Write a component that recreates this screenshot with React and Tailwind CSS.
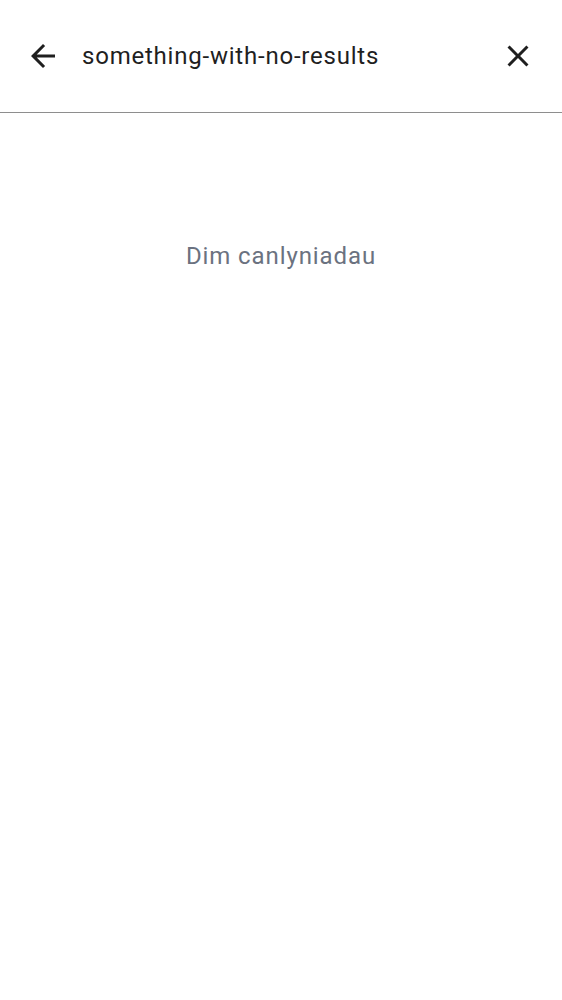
import React from 'react';

const App = () => {
  return (
    <div className="min-h-screen bg-white" style={{ fontFamily: 'Roboto, "Noto Sans", sans-serif' }}>
      {/* Search header */}
      <div className="flex items-center h-[113px] border-b border-[#8e8e8e] pl-[25px] pr-[26px]">
        <button className="w-9 h-9 text-[#1f1f1f] shrink-0">
          <svg viewBox="0 0 24 24" className="w-9 h-9" fill="currentColor">
            <path d="M20 11H7.83l5.59-5.59L12 4l-8 8 8 8 1.41-1.41L7.83 13H20v-2z" />
          </svg>
        </button>
        <div className="flex-1 ml-[21px] text-[24px] text-[#1f1f1f] tracking-[0.78px]">something-with-no-results</div>
        <button className="w-9 h-9 text-[#1f1f1f] shrink-0">
          <svg viewBox="0 0 24 24" className="w-9 h-9" fill="currentColor">
            <path d="M19 6.41L17.59 5 12 10.59 6.41 5 5 6.41 10.59 12 5 17.59 6.41 19 12 13.41 17.59 19 19 17.59 13.41 12z" />
          </svg>
        </button>
      </div>

      {/* Empty state */}
      <div className="pt-[127px] text-center text-[24px] leading-8 text-[#6b7280] tracking-[0.9px]">Dim canlyniadau</div>
    </div>
  );
};

export default App;
